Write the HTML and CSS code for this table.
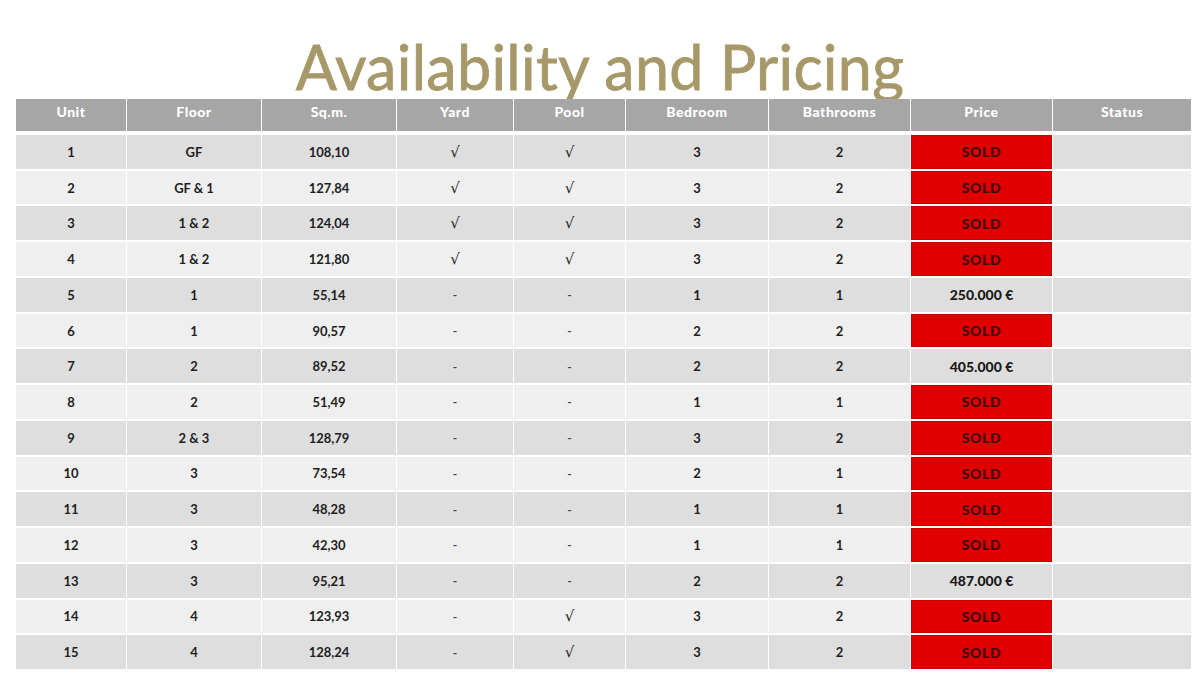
FILE: index.html
```html
<!DOCTYPE html>
<html lang="en">
<head>
<meta charset="utf-8">
<title>Availability and Pricing</title>
<link rel="stylesheet" href="styles.css">
</head>
<body>
<div class="page">
  <div class="title-wrap"><h1 class="title">Availability and Pricing</h1></div>
  <div class="sheet">
    <div class="row head">
      <div class="cell">Unit</div><div class="cell">Floor</div><div class="cell">Sq.m.</div><div class="cell">Yard</div><div class="cell">Pool</div><div class="cell">Bedroom</div><div class="cell">Bathrooms</div><div class="cell">Price</div><div class="cell">Status</div>
    </div>
    <div class="body">
      <div class="row odd"><div class="cell">1</div><div class="cell">GF</div><div class="cell">108,10</div><div class="cell chk">√</div><div class="cell chk">√</div><div class="cell">3</div><div class="cell">2</div><div class="cell sold">SOLD</div><div class="cell"></div></div>
      <div class="row even"><div class="cell">2</div><div class="cell">GF &amp; 1</div><div class="cell">127,84</div><div class="cell chk">√</div><div class="cell chk">√</div><div class="cell">3</div><div class="cell">2</div><div class="cell sold">SOLD</div><div class="cell"></div></div>
      <div class="row odd"><div class="cell">3</div><div class="cell">1 &amp; 2</div><div class="cell">124,04</div><div class="cell chk">√</div><div class="cell chk">√</div><div class="cell">3</div><div class="cell">2</div><div class="cell sold">SOLD</div><div class="cell"></div></div>
      <div class="row even"><div class="cell">4</div><div class="cell">1 &amp; 2</div><div class="cell">121,80</div><div class="cell chk">√</div><div class="cell chk">√</div><div class="cell">3</div><div class="cell">2</div><div class="cell sold">SOLD</div><div class="cell"></div></div>
      <div class="row odd"><div class="cell">5</div><div class="cell">1</div><div class="cell">55,14</div><div class="cell dash">-</div><div class="cell dash">-</div><div class="cell">1</div><div class="cell">1</div><div class="cell price">250.000 €</div><div class="cell"></div></div>
      <div class="row even"><div class="cell">6</div><div class="cell">1</div><div class="cell">90,57</div><div class="cell dash">-</div><div class="cell dash">-</div><div class="cell">2</div><div class="cell">2</div><div class="cell sold">SOLD</div><div class="cell"></div></div>
      <div class="row odd"><div class="cell">7</div><div class="cell">2</div><div class="cell">89,52</div><div class="cell dash">-</div><div class="cell dash">-</div><div class="cell">2</div><div class="cell">2</div><div class="cell price">405.000 €</div><div class="cell"></div></div>
      <div class="row even"><div class="cell">8</div><div class="cell">2</div><div class="cell">51,49</div><div class="cell dash">-</div><div class="cell dash">-</div><div class="cell">1</div><div class="cell">1</div><div class="cell sold">SOLD</div><div class="cell"></div></div>
      <div class="row odd"><div class="cell">9</div><div class="cell">2 &amp; 3</div><div class="cell">128,79</div><div class="cell dash">-</div><div class="cell dash">-</div><div class="cell">3</div><div class="cell">2</div><div class="cell sold">SOLD</div><div class="cell"></div></div>
      <div class="row even"><div class="cell">10</div><div class="cell">3</div><div class="cell">73,54</div><div class="cell dash">-</div><div class="cell dash">-</div><div class="cell">2</div><div class="cell">1</div><div class="cell sold">SOLD</div><div class="cell"></div></div>
      <div class="row odd"><div class="cell">11</div><div class="cell">3</div><div class="cell">48,28</div><div class="cell dash">-</div><div class="cell dash">-</div><div class="cell">1</div><div class="cell">1</div><div class="cell sold">SOLD</div><div class="cell"></div></div>
      <div class="row even"><div class="cell">12</div><div class="cell">3</div><div class="cell">42,30</div><div class="cell dash">-</div><div class="cell dash">-</div><div class="cell">1</div><div class="cell">1</div><div class="cell sold">SOLD</div><div class="cell"></div></div>
      <div class="row odd"><div class="cell">13</div><div class="cell">3</div><div class="cell">95,21</div><div class="cell dash">-</div><div class="cell dash">-</div><div class="cell">2</div><div class="cell">2</div><div class="cell price">487.000 €</div><div class="cell"></div></div>
      <div class="row even"><div class="cell">14</div><div class="cell">4</div><div class="cell">123,93</div><div class="cell dash">-</div><div class="cell chk">√</div><div class="cell">3</div><div class="cell">2</div><div class="cell sold">SOLD</div><div class="cell"></div></div>
      <div class="row odd"><div class="cell">15</div><div class="cell">4</div><div class="cell">128,24</div><div class="cell dash">-</div><div class="cell chk">√</div><div class="cell">3</div><div class="cell">2</div><div class="cell sold">SOLD</div><div class="cell"></div></div>
    </div>
  </div>
</div>
</body>
</html>
```
FILE: styles.css
```css
html, body {
  margin: 0;
  padding: 0;
  background: #ffffff;
}
.page {
  width: 1200px;
  height: 675px;
  overflow: hidden;
  font-family: "Lato", "Open Sans", sans-serif;
}
.title-wrap {
  height: 99px;
  overflow: hidden;
  display: flex;
  justify-content: center;
}
.title {
  margin: 0;
  padding-top: 30px;
  font-family: "Lato", sans-serif;
  font-weight: 400;
  font-size: 61px;
  line-height: 74px;
  color: #a69868;
  letter-spacing: 0.3px;
  white-space: nowrap;
  -webkit-text-stroke: 0.8px #a69868;
}
.sheet {
  margin-left: 16px;
  width: 1175px;
  display: flex;
  flex-direction: column;
  gap: 4px;
}
.row {
  display: grid;
  grid-template-columns: 110px 134px 134px 116px 111px 142px 141px 141px 138px;
  column-gap: 1px;
}
.head {
  height: 32px;
}
.head .cell {
  background: #a6a6a6;
  color: #ffffff;
  font-weight: 900;
  font-size: 14px;
  letter-spacing: 0.5px;
  align-items: flex-start;
  padding-top: 4px;
}
.body {
  display: grid;
  grid-template-rows: repeat(15, 1fr);
  row-gap: 2px;
  height: 534px;
}
.cell {
  display: flex;
  align-items: center;
  justify-content: center;
  font-size: 13px;
  font-weight: 700;
  color: #1e1e1e;
}
.odd .cell {
  background: #dedede;
}
.even .cell {
  background: #efefef;
}
.odd .cell.sold, .even .cell.sold {
  background: #e00000;
  color: #3c0606;
  font-weight: 900;
  font-size: 14px;
  letter-spacing: 0.6px;
  box-shadow: inset 0 0 0 1px #c40000;
}
.cell.price {
  font-weight: 900;
  font-size: 14px;
  color: #1a1a1a;
}
.cell.chk {
  font-family: "DejaVu Sans", sans-serif;
  font-weight: 400;
  font-size: 15px;
  color: #1e1e1e;
}
.cell.dash {
  font-weight: 700;
  font-size: 12px;
  color: #444;
}
```
